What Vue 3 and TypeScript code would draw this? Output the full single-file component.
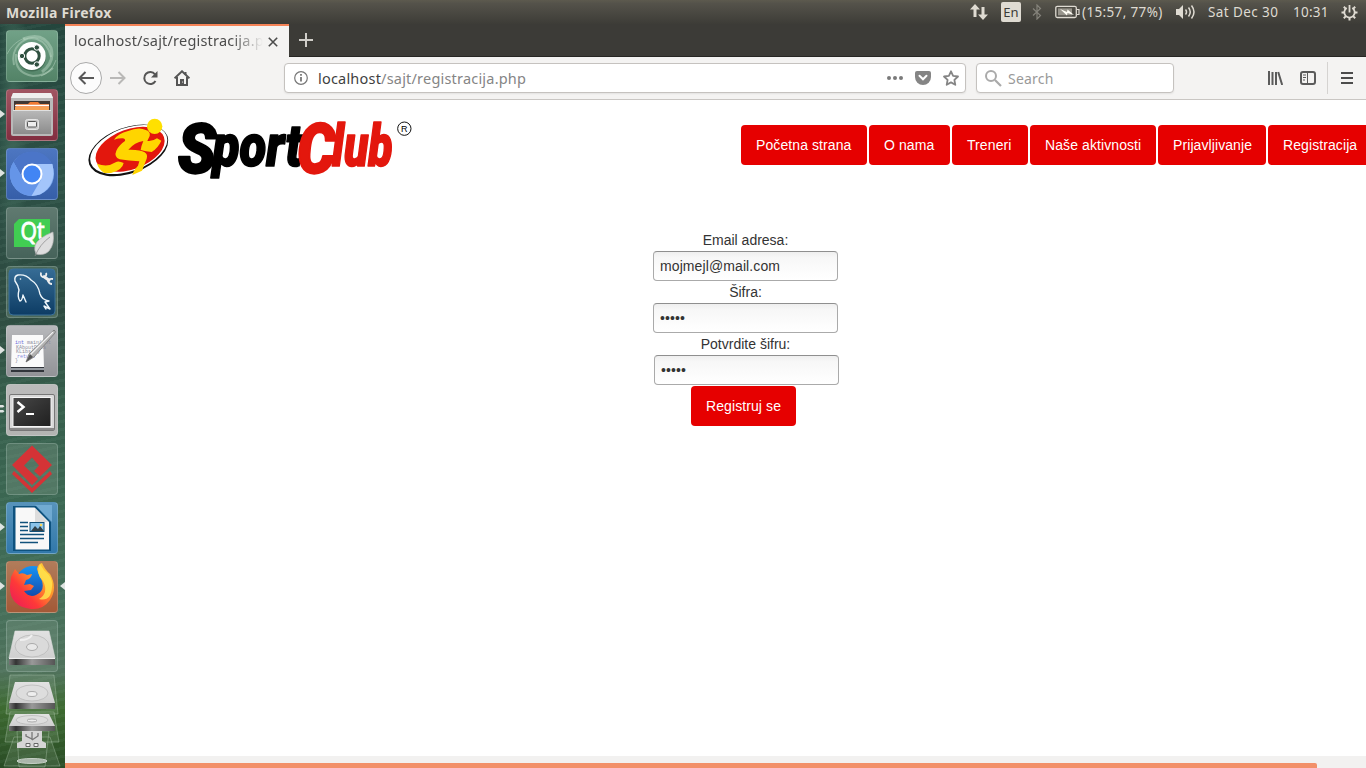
<script setup lang="ts">
interface NavItem { label: string; key: string }
interface Field { label: string; type: string; value: string; shifted?: boolean }
interface Tile { name: string; mark?: 'arrow' | 'bars'; active?: boolean }

const nav: NavItem[] = [
  { label: 'Početna strana', key: 'w126' },
  { label: 'O nama', key: 'w81' },
  { label: 'Treneri', key: 'w76' },
  { label: 'Naše aktivnosti', key: 'w126' },
  { label: 'Prijavljivanje', key: 'w108' },
  { label: 'Registracija', key: 'w104' },
]
const fields: Field[] = [
  { label: 'Email adresa:', type: 'text', value: 'mojmejl@mail.com' },
  { label: 'Šifra:', type: 'dots', value: '•••••' },
  { label: 'Potvrdite šifru:', type: 'dots', value: '•••••', shifted: true },
]
const tiles: Tile[] = [
  { name: 'dash' },
  { name: 'files', mark: 'arrow' },
  { name: 'chromium', mark: 'arrow' },
  { name: 'qt' },
  { name: 'mysql' },
  { name: 'editor', mark: 'arrow' },
  { name: 'terminal', mark: 'bars' },
  { name: 'paradigm' },
  { name: 'writer', mark: 'arrow' },
  { name: 'firefox', mark: 'arrow', active: true },
  { name: 'drive' },
]
</script>

<template>
  <div class="desktop">
    <header class="panel">
      <span class="app-title">Mozilla Firefox</span>
      <div class="indicators">
        <svg class="i-net" width="18" height="18" viewBox="0 0 18 18"><path d="M5 1 0 6.500h3.500V14h3V6.500H10zM13 17l5-5.500h-3.500V4h-3v7.500H8z" fill="#dfdbd2" /></svg>
        <span class="lang">En</span>
        <svg class="i-bt" width="10" height="16" viewBox="0 0 10 16"><path d="M1 4.500 8.500 11.500 5 15V1l3.500 3.500L1 11.500" fill="none" stroke="#85837b" stroke-width="1.200" /></svg>
        <svg class="i-bat" width="25" height="14" viewBox="0 0 25 14"><rect x=".8" y="1.300" width="20.500" height="11.200" rx="1.500" fill="none" stroke="#dfdbd2" stroke-width="1.300" /><path d="M22 4.500h2v5h-2" fill="none" stroke="#dfdbd2" stroke-width="1.200" /><rect x="3" y="3.400" width="14" height="7" fill="#98958c" /><path d="M5 4l7 3 .5-2.500L19 10l-6.500-2-.5 2.500z" fill="#fffdf5" /></svg>
        <span class="battery">(15:57, 77%)</span>
        <svg class="i-vol" width="20" height="16" viewBox="0 0 20 16"><path d="M0 5h3l4-4v14l-4-4H0z" fill="#dfdbd2" /><path d="M9.500 5.500q2 2.500 0 5M12.500 3.500q3.500 4.500 0 9M15.500 1.500q5 6.500 0 13" fill="none" stroke="#dfdbd2" stroke-width="1.500" /></svg>
        <span class="date">Sat Dec 30</span>
        <span class="clock">10:31</span>
        <svg class="i-gear" width="17" height="17" viewBox="0 0 17 17"><g fill="none" stroke="#dfdbd2"><path d="M5.700 4A5.200 5.200 0 1 0 11.300 4" stroke-width="1.800" /><path d="M8.500 1v7.500" stroke-width="1.800" /><path d="M8.500 13.500v3M.5 8.500h3M13.500 8.500h3M2.800 2.800l2.100 2.100M14.200 2.800l-2.100 2.100M2.800 14.200l2.100-2.100M14.200 14.200l-2.100-2.100" stroke-width="2" /></g></svg>
      </div>
    </header>

    <div class="body">
      <aside class="launcher">
        <div v-for="t in tiles" :key="t.name" class="slot">
          <svg v-if="t.mark === 'arrow'" class="mark" width="5" height="8" viewBox="0 0 5 8"><path d="M0 0 5 4 0 8z" fill="#dfe4e2" /></svg>
          <svg v-if="t.mark === 'bars'" class="mark" width="5" height="8" viewBox="0 0 5 8"><path d="M0 0h3l1.500 1.200L3 2.500H0zM0 5h3l1.500 1.200L3 7.500H0z" fill="#dfe4e2" /></svg>
          <svg v-if="t.active" class="mark right" width="5" height="8" viewBox="0 0 5 8"><path d="M5 0 0 4l5 4z" fill="#dfe4e2" /></svg>
          <div class="tile" :class="t.name">
            <svg v-if="t.name === 'dash'" viewBox="0 0 52 52">
              <g fill="none" stroke="#c9e2cf" stroke-opacity=".42"><path d="M8 35C4 18 18 5 31 9q11 4 14 18" stroke-width="2" /><path d="M17 9q20-8 28 9 4 14-9 24" stroke-width="3" /><path d="M10 24q-2 19 17 22 12 0 20-8" stroke-width="2" /><path d="M1 24q6-12 18-16M50 30q-4 12-15 16" /></g>
              <circle cx="26" cy="27.500" r="14" fill="#284d38" opacity=".45" /><circle cx="25.700" cy="26" r="14" fill="#fff" />
              <circle cx="26" cy="26" r="7.200" fill="none" stroke="#2f5040" stroke-width="3" />
              <g fill="#2f5040" stroke="#fff" stroke-width="1"><circle cx="16" cy="26" r="2.700" /><circle cx="30.800" cy="17.500" r="2.700" /><circle cx="30.800" cy="34.500" r="2.700" /></g>
            </svg>
            <svg v-if="t.name === 'files'" viewBox="0 0 52 52">
              <path d="M7 4h38l2 5v36q0 2-2 2H7q-2 0-2-2V9z" fill="#b9b9b9" /><path d="M7 4h38l2 5H5z" fill="#efefef" /><path d="M8 12h36v10H8z" fill="#403733" />
              <path d="M10 15h12l2-2h8l2 2h9v8H9z" fill="#ef7a34" /><path d="M9 16.500h34" stroke="#fff" stroke-width="1.300" /><path d="M9 18h34v4H9z" fill="#f5a155" />
              <path d="M7 21h38v24H7z" fill="url(#steel)" /><path d="M7 21.500h38" stroke="#e0e0e0" />
              <rect x="19.500" y="30.500" width="13" height="10" rx="2" fill="#c9c9c9" stroke="#e5e5e5" /><rect x="21.500" y="32.500" width="9" height="5.500" rx="1" fill="#eee" stroke="#555" />
            </svg>
            <svg v-if="t.name === 'chromium'" viewBox="0 0 52 52">
              <circle cx="26" cy="26" r="22" fill="#80aef0" /><path d="M26 16h20A22 22 0 0 0 7.500 14L17 31a10.500 10.500 0 0 1 9-15z" fill="#4b75c8" /><path d="M7.500 14a22 22 0 0 0 18 34l9-16q-11 9-18-2z" fill="#6595e8" /><path d="M26 16h20.500Q51 37 34 46.500l-8.500 1.500 9.500-16z" fill="#a3c5fb" />
              <circle cx="26" cy="26" r="10.500" fill="#fff" /><circle cx="26" cy="26" r="8.500" fill="#4285f4" />
            </svg>
            <svg v-if="t.name === 'qt'" viewBox="0 0 52 52">
              <path d="M13 12h31v23l-5 5H8V17z" fill="#41cd52" /><text x="14.500" y="33" class="qt-text" textLength="24" lengthAdjust="spacingAndGlyphs">Qt</text>
              <path d="M47 25q2 12-4 19-5 5-13 3-4-9 4-15 5-4 13-7z" fill="#dedede" stroke="#b5b5b5" stroke-width=".7" /><path d="M29 49q5-12 15-19" fill="none" stroke="#929292" stroke-width=".8" />
            </svg>
            <svg v-if="t.name === 'mysql'" viewBox="0 0 52 52">
              <rect x="3" y="3" width="46" height="46" rx="4" fill="url(#navy)" stroke="#3b7199" />
              <path d="M20 36l-3-7q-1 6-3 6-3-4-1-11-1-5-4-9-1-5 3-6 8-1 13 5 7 4 9 14 2 6 9 7l-4 1 5 7-6-3 2 3" fill="none" stroke="#eef6fb" stroke-width="1.400" stroke-linejoin="round" stroke-linecap="round" /><circle cx="14.500" cy="13" r=".8" fill="#eef6fb" />
              <path d="m37 10 7 5" stroke="#eee" stroke-width="3" /><path d="M35 6.500q-1 5 4 4.500 2-2 1-4M42 16q0-4 5-3M42 15q1 3 4 3" stroke="#eee" stroke-width="1.800" fill="none" />
            </svg>
            <svg v-if="t.name === 'editor'" viewBox="0 0 52 52">
              <path d="M6 10h31l1 33H5z" fill="#fafafa" /><path d="M5 42h33v5H5z" fill="#31343a" /><path d="M5 44h33" stroke="#b7bcc3" stroke-width="1.300" />
              <g class="code"><text x="9" y="19"><tspan fill="#6b6bd9">int</tspan> main(int</text><text x="10" y="23.500">KAboutData</text><text x="10" y="28">KLibs(a)</text><text x="11" y="32.500" fill="#8888dd">return</text><text x="9" y="37">}</text></g>
              <path d="M48 5q2 1 1 3L28 32l-8 5 3-8z" fill="#b2b2b2" stroke="#777" stroke-width=".8" /><path d="m24 30 23-23" stroke="#f2f2f2" stroke-width="1.200" /><path d="m20 37 7-5-3-3z" fill="#555" />
            </svg>
            <svg v-if="t.name === 'terminal'" viewBox="0 0 52 52">
              <rect x="3.500" y="10.500" width="45" height="36" rx="1.500" fill="#d9d9d9" stroke="#777" /><path d="M4 44h44v2H4z" fill="#888" /><rect x="6.500" y="13" width="39" height="30" fill="#f5f5f5" /><rect x="7.500" y="14" width="37" height="28" fill="url(#screen)" />
              <path d="m11.500 18 6 5-6 5" fill="none" stroke="#fff" stroke-width="2.500" /><path d="M20 30h8" stroke="#fff" stroke-width="2" />
            </svg>
            <svg v-if="t.name === 'paradigm'" viewBox="0 0 52 52">
              <path fill-rule="evenodd" d="M26 2.500 46 22 34 33.500 28 28l5-5.500-7-8-8 8L32 36l-6 6L6 22z" fill="#d43336" /><path d="m8 28 18 17 18-17 2 3-20 19L6 31z" fill="#d43336" />
            </svg>
            <svg v-if="t.name === 'writer'" viewBox="0 0 52 52">
              <path d="M29 3h17v17z" fill="#7fb6dd" opacity=".7" /><path d="M7 4h23l15 16v29H7z" fill="#0e527e" /><path d="M9.500 5.500h19L43 20v27.500H9.500z" fill="#f8f8f8" /><path d="M29 6v14h13z" fill="#ddd" />
              <path d="M14 20.500h8M14 24.500h8M14 28.500h8M14 32.500h24M14 36.500h24M14 40.500h18" stroke="#11527b" stroke-width="1.600" /><rect x="24" y="20.500" width="14" height="9" fill="#8ac3ea" stroke="#135076" /><path d="m25 29 4-5 3 3 2-3 4 5z" fill="#32424a" /><circle cx="35" cy="23" r="1.300" fill="#fdd757" />
            </svg>
            <svg v-if="t.name === 'firefox'" viewBox="0 0 52 52">
              <circle cx="27" cy="23" r="18" fill="url(#globe)" />
              <path d="M5 16l4-8 4 5q4-2 8 1l5-1q-1 5-6 6l-2 5 6-1 4 2-3 4-7 1q5 7 12 4 9-4 6-14-4-8-5-12Q32 3 36 2q3 7 8 11 8 14 0 26-7 10-19 9Q3 45 4 25z" fill="url(#fox)" />
              <path d="M34 3q-5 10 3 17 6 12-4 18 12 3 13-12 1-6-3-12-6-5-9-11z" fill="#ffe34c" opacity=".85" />
            </svg>
            <svg v-if="t.name === 'drive'" viewBox="0 0 52 52"><path d="M9 11h34l6 27H3z" fill="url(#disk)" stroke="#ddd" stroke-width=".6" /><ellipse cx="26" cy="26" rx="17" ry="11" fill="#dadada" stroke="#b5b5b5" stroke-width=".7" /><path d="M26 15q-3 5-12 5" fill="none" stroke="#f0f0f0" stroke-width="2" /><ellipse cx="26" cy="27" rx="5.500" ry="3.500" fill="#e8e8e8" stroke="#aaa" /><path d="M3 38h46v7H3z" fill="url(#edge)" /><path d="M3 38.500h46" stroke="#eee" /></svg>
          </div>
        </div>
        <svg class="stack" width="65" height="96" viewBox="0 0 65 96">
          <path d="M10 3h44l4 39H6zM10 40h44l5 30H5zM14 65h36l10 29H4zM17 59h32l-4 36H19z" fill="#d8ead3" fill-opacity=".12" stroke="#d2e4d0" stroke-opacity=".3" />
          <path d="M15 10h34l6 21H9z" fill="url(#disk)" /><ellipse cx="32" cy="21" rx="16" ry="8" fill="#ddd" stroke="#b5b5b5" stroke-width=".7" /><ellipse cx="32" cy="22" rx="5" ry="2.500" fill="#eee" stroke="#aaa" /><path d="M9 31h46v6H9z" fill="url(#edge)" />
          <path d="M15 42h34l6 12H9z" fill="url(#disk)" /><ellipse cx="32" cy="48" rx="16" ry="4.500" fill="#ddd" stroke="#b5b5b5" stroke-width=".7" /><ellipse cx="32" cy="48.500" rx="5" ry="1.500" fill="#eee" stroke="#aaa" /><path d="M9 54h46v5H9z" fill="url(#edge)" />
          <path d="M22 59h20v10l4 2v5H17v-5l5-2z" fill="#d5d5d5" /><path d="M32 60v8m0-1-6-3v-2m6 6 6-4v-3" fill="none" stroke="#777" stroke-width="1.300" /><path d="M26 71.500h4v3h-4zM34 71.500h4v3h-4z" fill="#eee" stroke="#666" /><ellipse cx="32" cy="89" rx="15" ry="2.500" fill="#aab6aa" stroke="#c5d0c5" />
        </svg>
        <svg class="defs" width="0" height="0">
          <defs>
            <linearGradient id="steel" x1="0" y1="0" x2="0" y2="1"><stop stop-color="#b9b9b9" /><stop offset="1" stop-color="#8c8c8c" /></linearGradient>
            <linearGradient id="navy" x1="0" y1="0" x2="0" y2="1"><stop stop-color="#366c95" /><stop offset="1" stop-color="#0d3c64" /></linearGradient>
            <linearGradient id="screen" x1="0" y1="0" x2="1" y2="1"><stop stop-color="#474747" /><stop offset=".5" stop-color="#333" /><stop offset="1" stop-color="#202020" /></linearGradient>
            <linearGradient id="globe" x1="0" y1="0" x2="0" y2="1"><stop stop-color="#1694f5" /><stop offset="1" stop-color="#123e9e" /></linearGradient>
            <linearGradient id="fox" x1="0" y1="1" x2="1" y2="0"><stop stop-color="#e7175f" /><stop offset=".35" stop-color="#ff3938" /><stop offset=".65" stop-color="#ff982a" /><stop offset="1" stop-color="#ffe63e" /></linearGradient>
            <linearGradient id="disk" x1="0" y1="0" x2="0" y2="1"><stop stop-color="#e2e2e2" /><stop offset="1" stop-color="#cfcfcf" /></linearGradient>
            <linearGradient id="edge"><stop stop-color="#777" /><stop offset=".15" stop-color="#333" /><stop offset=".5" stop-color="#999" /><stop offset="1" stop-color="#555" /></linearGradient>
          </defs>
        </svg>
      </aside>

      <section class="browser">
        <div class="tabs">
          <div class="tab">
            <span class="tab-title">localhost/sajt/registracija.php</span>
            <svg class="close" width="10" height="10" viewBox="0 0 10 10"><path d="m.8.8 8.400 8.400m0-8.400L.8 9.200" stroke="#4c4c4c" stroke-width="1.600" /></svg>
          </div>
          <svg class="plus" width="14" height="14" viewBox="0 0 14 14"><path d="M7 0v14M0 7h14" stroke="#d0cec9" stroke-width="2" /></svg>
        </div>
        <div class="toolbar">
          <div class="back"><svg width="16" height="14" viewBox="0 0 16 14"><path d="M16 7H1.500M7.500 1l-6 6 6 6" fill="none" stroke="#595959" stroke-width="2" /></svg></div>
          <svg class="fwd" width="16" height="14" viewBox="0 0 16 14"><path d="M0 7h14.500m-6-6 6 6-6 6" fill="none" stroke="#b9b8b7" stroke-width="2" /></svg>
          <svg class="reload" width="16" height="16" viewBox="0 0 16 16"><path d="M13 4.300A6 6 0 1 0 13.500 11" fill="none" stroke="#555" stroke-width="2" /><path d="M15.500 1v6.500H9z" fill="#555" /></svg>
          <svg class="home" width="16" height="16" viewBox="0 0 16 16"><path d="m.6 8.300 7.400-7 7.400 7" fill="none" stroke="#555" stroke-width="2" /><path d="M3 7v8h10V7M11.500 2v3" fill="none" stroke="#555" stroke-width="2" /><path d="M6 9h4v6H6z" fill="#555" /><circle cx="8.600" cy="12" r=".6" fill="#fff" /></svg>
          <div class="url">
            <svg class="info" width="14" height="14" viewBox="0 0 14 14"><circle cx="7" cy="7" r="6.300" fill="none" stroke="#777" stroke-width="1.200" /><path d="M7 6v4.500M7 3v1.700" stroke="#777" stroke-width="1.800" /></svg>
            <span class="url-text"><b>localhost</b>/sajt/registracija.php</span>
            <svg class="dots" width="16" height="4" viewBox="0 0 16 4"><g fill="#7a7a7a"><circle cx="2" cy="2" r="2" /><circle cx="8" cy="2" r="2" /><circle cx="14" cy="2" r="2" /></g></svg>
            <svg class="pocket" width="16" height="14" viewBox="0 0 16 14"><path d="M2 0h12q2 0 2 2v4a8 8 0 0 1-16 0V2q0-2 2-2z" fill="#858585" /><path d="m4.500 4.800 3.500 3.500 3.500-3.500" fill="none" stroke="#fff" stroke-width="2" stroke-linecap="round" /></svg>
            <svg class="star" width="16" height="16" viewBox="0 0 16 16"><path d="m8 1.300 2.100 4.500 4.900.7-3.600 3.400.9 4.900L8 12.400l-4.300 2.400.9-4.900L1 6.500l4.900-.7z" fill="none" stroke="#858585" stroke-width="1.800" stroke-linejoin="round" /></svg>
          </div>
          <div class="search"><svg width="17" height="17" viewBox="0 0 17 17"><circle cx="6" cy="6" r="5" fill="none" stroke="#aaa" stroke-width="2" /><path d="m10 10 6 6" stroke="#aaa" stroke-width="2.200" /></svg><span>Search</span></div>
          <svg class="library" width="15" height="14" viewBox="0 0 15 14"><path d="M1 0v14M4.500 1v13M8 1v13M10.200 1l4 13" stroke="#5b5b5b" stroke-width="2" fill="none" /></svg>
          <svg class="sidebar" width="16" height="14" viewBox="0 0 16 14"><rect x="1" y="1" width="14" height="12" rx="2" fill="none" stroke="#5b5b5b" stroke-width="2" /><path d="M7.500 1v12" stroke="#5b5b5b" /><path d="M3 4h3M3 6.500h3M3 9h2" stroke="#5b5b5b" /></svg>
          <i class="sep"></i>
          <svg class="menu" width="12" height="12" viewBox="0 0 12 12"><path d="M0 1h12M0 6h12M0 11h12" stroke="#4c4c4c" stroke-width="1.800" /></svg>
        </div>

        <main class="page">
          <div class="site-head">
            <svg class="logo" width="360" height="90" viewBox="0 0 1080 270">
              <g transform="rotate(-20 175 136)"><ellipse cx="175" cy="136" rx="125" ry="69" fill="#111" /><ellipse cx="177" cy="134" rx="121" ry="65" fill="#fff" /><ellipse cx="181" cy="135" rx="108" ry="60" fill="#e3170d" /></g>
              <g transform="translate(42 30)" fill="#ffd500">
                <path d="M90 74Q105 54 130 49 165 34 185 45q15 4 12 18l-7 15q15 2 29-8l13 7q-10 22-29 34-17-1-33-6 2-13 8-27-26 4-45 26 36-1 49 8 10 6 6 19l-14 36-29 13q2-12 17-28l4-13q-32-1-59-6-18-8-10-26 8-17 26-29 2-7-8-8-13 0-25 4z" />
                <path d="M39 146q32 12 56-4 8-6 24 2-4 22-38 30l-20 0q-16-10-22-28z" /><circle cx="212" cy="34" r="23" fill="#ffe000" />
              </g>
              <g class="wordmark">
                <g fill="#000" stroke="#000"><text x="324" y="204" class="cap" textLength="114" lengthAdjust="spacingAndGlyphs">S</text><text x="428" y="183" textLength="268" lengthAdjust="spacingAndGlyphs">port</text></g>
                <g fill="#e3170d" stroke="#e3170d"><text x="682" y="204" class="cap" textLength="114" lengthAdjust="spacingAndGlyphs">C</text><text x="786" y="183" textLength="182" lengthAdjust="spacingAndGlyphs">lub</text></g>
              </g>
              <circle cx="1003" cy="71" r="20" fill="none" stroke="#111" stroke-width="3" /><text x="993" y="81" class="reg">R</text>
            </svg>
            <nav class="nav"><a v-for="n in nav" :key="n.label" :class="n.key">{{ n.label }}</a></nav>
          </div>
          <form class="form">
            <template v-for="f in fields" :key="f.label">
              <label>{{ f.label }}</label>
              <div class="input" :class="[f.type, { shifted: f.shifted }]">{{ f.value }}</div>
            </template>
            <button type="button">Registruj se</button>
          </form>
        </main>
        <div class="scroll"><div class="thumb"></div></div>
      </section>
    </div>
  </div>
</template>

<style>
body { overflow: hidden; background: #fff; }
</style>
<style scoped>
* { box-sizing: border-box; }
svg { display: block; flex: none; }
.desktop { width: 1366px; height: 768px; overflow: hidden; display: flex; flex-direction: column; font-family: "Noto Sans", "Open Sans", sans-serif; font-size: 14px; }
.panel { height: 24px; flex: none; display: flex; align-items: center; justify-content: space-between; padding: 0 8px 0 6px; background: linear-gradient(#5d5a4e, #54524a 15%, #3d3c37); color: #dfdbd2; font-size: 13.500px; }
.app-title { font-weight: 700; font-size: 14px; letter-spacing: .28px; }
.indicators { display: flex; align-items: center; white-space: nowrap; }
.lang { width: 20px; height: 20px; margin: 0 11px 0 13px; background: #dfdbd2; color: #3c3b37; border-radius: 2px; text-align: center; line-height: 20px; font-size: 13px; }
.i-bat { margin: 0 2px 0 13px; }
.battery { width: 83px; letter-spacing: .35px; }
.i-vol { margin: 0 12px 0 11px; }
.date { width: 71px; margin-right: 14px; letter-spacing: .4px; }
.clock { width: 37px; margin-right: 11px; letter-spacing: .25px; }
.body { flex: 1; display: flex; min-height: 0; }
.launcher { width: 65px; flex: none; padding-top: 6px; overflow: hidden; background: radial-gradient(ellipse at 20% 12%, #3e6657 0, transparent 20%), repeating-linear-gradient(168deg, rgba(180,225,205,.05) 0 3px, transparent 3px 8px), linear-gradient(#24463d, #2d5146 20%, #2d4a40 38%, #365d4b 50%, #3c6853 66%, #456e59 78%, #50725c 87%, #3d6a30 92%, #294b25); }
.slot { position: relative; height: 59px; padding-left: 6px; }
.mark { position: absolute; left: 0; top: 21px; }
.mark.right { left: 60px; }
.tile { width: 52px; height: 52px; border-radius: 4px; border: 1px solid rgba(230,245,240,.2); background: rgba(120,150,132,.38); overflow: hidden; }
.tile svg { width: 52px; height: 52px; margin: -1px; }
.tile.dash { background: linear-gradient(#71a187, #538367); }
.tile.files { background: linear-gradient(#a15562, #822e40); }
.tile.chromium { background: linear-gradient(#4d76c1, #365fa9); }
.tile.qt { background: linear-gradient(#607a70, #46635a); }
.tile.editor { background: linear-gradient(#b7b8bb, #929397); }
.tile.terminal { background: linear-gradient(#bbb, #b3b4b2); }
.tile.writer { background: linear-gradient(#5793bb, #3178aa); }
.tile.firefox { background: linear-gradient(#b17c5a, #a35937); }
.qt-text { font: 25px "Open Sans", sans-serif; fill: #fff; stroke: #fff; stroke-width: 1px; }
.code { font: 5px "Liberation Mono", monospace; fill: #8d8d9d; }
.stack { margin-top: -7px; }
.defs { position: absolute; }
.browser { flex: 1; min-width: 0; display: flex; flex-direction: column; }
.tabs { height: 33px; flex: none; display: flex; background: #3c3b37; border-bottom: 1px solid #272623; }
.tab { width: 224px; height: 33px; background: #f4f3f2; border-top: 2px solid #f58357; display: flex; align-items: center; padding-left: 9px; }
.tab-title { width: 189px; overflow: hidden; white-space: nowrap; color: #4c4c4c; font-size: 14.500px; letter-spacing: .2px; padding-bottom: 3px; mask-image: linear-gradient(90deg, #000 158px, transparent 189px); }
.close { margin-left: 5px; }
.plus { margin: 9px 0 0 10px; }
.toolbar { height: 43px; flex: none; background: #f4f3f2; border-bottom: 1px solid #c9c6c3; display: flex; align-items: center; padding: 0 13px 0 5px; }
.back { width: 32px; height: 32px; border: 1px solid #aaa; border-radius: 50%; background: #fcfcfc; display: grid; place-items: center; }
.fwd { margin-left: 8px; }
.reload { margin-left: 16px; }
.home { margin-left: 16px; }
.url, .search { height: 30px; background: #fff; border: 1px solid #c5c2bf; border-radius: 4px; display: flex; align-items: center; box-shadow: 0 1px 2px rgba(0,0,0,.07); }
.url { width: 682px; margin-left: 94px; padding: 0 6px 0 9px; }
.url-text { flex: 1; margin-left: 10px; color: #858585; font-size: 14.500px; letter-spacing: .2px; white-space: nowrap; }
.url-text b { font-weight: 400; color: #3f3f3f; }
.pocket { margin-left: 12px; }
.star { margin-left: 12px; }
.search { width: 198px; margin-left: 10px; padding-left: 8px; color: #999; font-size: 14px; letter-spacing: .2px; }
.search span { margin-left: 6px; }
.library { margin-left: auto; }
.sidebar { margin-left: 17px; }
.sep { width: 1px; height: 32px; background: #d5d3d1; margin: 0 13px 0 11px; }
.page { height: 656px; flex: none; background: #fff; overflow: hidden; font-family: "Liberation Sans", Arial, sans-serif; font-size: 14px; color: #333; }
.site-head { display: flex; align-items: flex-start; height: 130px; padding: 5px 0 0 5px; }
.nav { display: flex; gap: 2px; margin: 20px 0 0 311px; }
.nav a { height: 40px; flex: none; border-radius: 4px; background: #e60000; color: #fff; padding-left: 15px; letter-spacing: .09px; line-height: 40px; white-space: nowrap; }
.w126 { width: 126px; }
.w81 { width: 81px; }
.w76 { width: 76px; }
.w108 { width: 108px; }
.w104 { width: 104px; }
.wordmark { font: italic 900 176px Roboto, "Liberation Sans", sans-serif; stroke-width: 5px; stroke-linejoin: round; }
.cap { font-size: 204px; stroke-width: 7px; }
.reg { font: 27px "Liberation Sans", Arial, sans-serif; }
.form { width: 185px; margin-left: 588px; display: flex; flex-direction: column; align-items: center; }
.form label { height: 20px; line-height: 20px; }
.input { width: 185px; height: 30px; margin: 1px 0; flex: none; border: 1px solid #aaa; border-top-color: #8f8f8f; border-radius: 4px; background: linear-gradient(#efefef, #f7f7f7 20%, #fff); line-height: 28px; padding-left: 6px; font-size: 14px; letter-spacing: .1px; }
.input.shifted { position: relative; left: 1px; }
.form button { width: 105px; height: 40px; flex: none; margin-right: 4px; border: 0; padding: 0; border-radius: 4px; background: #e60000; color: #fff; font: 14px "Liberation Sans", Arial, sans-serif; letter-spacing: .1px; }
.scroll { height: 12px; flex: none; background: #f2f1f0; display: flex; align-items: flex-end; }
.thumb { width: 1252px; height: 5px; background: #f29069; border-top-right-radius: 2px; }
</style>
